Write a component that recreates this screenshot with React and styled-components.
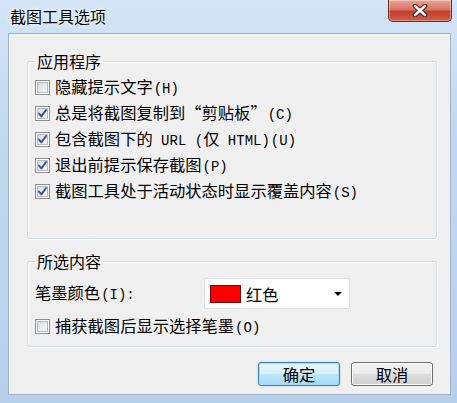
import React from "react";
import styled, { createGlobalStyle } from "styled-components";

const Global = createGlobalStyle`
  html, body { margin: 0; padding: 0; }
  body {
    width: 457px; height: 403px; overflow: hidden;
    font-family: "Noto Sans CJK SC", "Noto Sans", sans-serif;
    color: #000;
  }
`;

const Window = styled.div`
  width: 457px; height: 403px; box-sizing: border-box;
  padding: 0 6px 8px 8px;
  display: flex; flex-direction: column;
  background: linear-gradient(180deg, #d3e5f6 0%, #c1d8f0 35%, #b6d0ec 100%);
`;

const TitleBar = styled.div`
  height: 33px; flex: none;
  display: flex; align-items: flex-start; justify-content: space-between;
`;

const Title = styled.div`
  margin: 8px 0 0 2px;
  font-size: 16px; line-height: 16px;
  text-shadow: 0 0 6px rgba(255,255,255,0.9), 0 0 2px rgba(255,255,255,0.9);
`;

const CloseButton = styled.div`
  width: 64px; height: 22px; box-sizing: border-box; margin-right: -1px;
  border: 1px solid #6a2b22; border-top: none;
  border-radius: 0 0 5px 5px;
  background: linear-gradient(180deg, #eaa597 0%, #d87566 45%, #c43f2e 55%, #d25e49 100%);
  box-shadow: inset 0 0 0 1px rgba(255,255,255,0.35);
  display: flex; align-items: center; justify-content: center;
`;

const Client = styled.div`
  flex: 1; box-sizing: border-box;
  background: #f0f0f0;
  border: 1px solid #a2b5cc;
  display: flex; flex-direction: column;
`;

const Group = styled.fieldset`
  margin: ${p => p.$top}px 13px 0 18px;
  padding: ${p => p.$pt}px 7px ${p => p.$pb}px 7px;
  border: 1px solid #d3dce2;
  border-radius: 3px;
  box-shadow: inset 1px 1px 0 #fff, 1px 1px 0 #fff;
  min-width: 0;
`;

const Legend = styled.legend`
  padding: 0 2px; margin: 0;
  font-size: 16px; line-height: 16px;
`;

const CheckRow = styled.label`
  height: 26px; display: flex; align-items: center; gap: 5px;
  font-size: 16.3px; line-height: 16px; white-space: nowrap;
  margin-top: ${p => p.$mt || 0}px;
`;

const Box = styled.span`
  width: 15px; height: 15px; box-sizing: border-box; flex: none;
  border: 1px solid #8f8f8f;
  background: #fff;
  padding: 1px;
  display: flex;
`;

const BoxInner = styled.span`
  flex: 1; display: flex; align-items: center; justify-content: center;
  border: 1px solid #b7bcc3;
  background: linear-gradient(135deg, #d4d8dd 0%, #eceef0 60%, #f8f8f8 100%);
  position: relative;
`;

const CheckSvg = styled.svg`
  position: absolute; left: -2px; top: -2px;
`;

const Latin = styled.span`
  font-family: "Liberation Mono", "DejaVu Sans Mono", monospace;
  font-size: 14px;
`;

const Key = styled(Latin)`
  margin-left: 1px;
`;

const FieldRow = styled.div`
  height: 31px;
  display: grid; grid-template-columns: 169px 146px; align-items: center;
`;

const FieldLabel = styled.span`
  font-size: 16.3px; line-height: 16px; white-space: nowrap;
`;

const Select = styled.div`
  height: 31px; box-sizing: border-box;
  border: 1px solid #dde1e6; border-radius: 2px;
  background: #fff;
  display: flex; align-items: center;
  padding-left: 5px; padding-right: 7px;
  font-size: 16.3px; line-height: 16px;
`;

const Swatch = styled.span`
  width: 31px; height: 18px; box-sizing: border-box;
  background: ${p => p.$color};
  border: 1px solid #6e0d0d;
  margin-right: 5px;
`;

const Arrow = styled.span`
  margin-left: auto;
  width: 0; height: 0;
  border-left: 4px solid transparent;
  border-right: 4px solid transparent;
  border-top: 4px solid #000;
`;

const ButtonRow = styled.div`
  display: flex; justify-content: flex-end; gap: 11px;
  margin: 15px 17px 0 0;
`;

const Button = styled.button`
  width: 82px; height: 24px; box-sizing: border-box;
  font-family: inherit; font-size: 16.3px; line-height: 16px; padding: 0;
  color: #000;
  border-radius: 3px;
  border: 1px solid ${p => (p.$default ? "#3c7fb1" : "#707070")};
  background: ${p =>
    p.$default
      ? "linear-gradient(180deg, #eaf6fd 0%, #d9f0fc 50%, #bee6fd 51%, #a7d9f5 100%)"
      : "linear-gradient(180deg, #f2f2f2 0%, #ebebeb 50%, #dddddd 51%, #cfcfcf 100%)"};
  box-shadow: ${p =>
    p.$default
      ? "inset 0 0 0 1px #a9def7, 0 0 2px #8ccbee"
      : "inset 0 0 0 1px #fcfcfc"};
`;

function Checkbox({ checked, children, mt }) {
  return (
    <CheckRow $mt={mt}>
      <Box>
        <BoxInner>
          {checked && (
            <CheckSvg width="13" height="13" viewBox="0 0 13 13">
              <path d="M3 6.6 L5.4 9.4 L10 3" fill="none" stroke="#3a4e9c" strokeWidth="1.9" strokeLinecap="round" strokeLinejoin="round" />
            </CheckSvg>
          )}
        </BoxInner>
      </Box>
      <span>{children}</span>
    </CheckRow>
  );
}

export default function App() {
  return (
    <>
      <Global />
      <Window>
        <TitleBar>
          <Title>截图工具选项</Title>
          <CloseButton>
            <svg width="16" height="13" viewBox="0 0 16 13">
              <path d="M3 2 L13 11 M13 2 L3 11" stroke="#4a1a14" strokeWidth="4.6" strokeLinecap="round" />
              <path d="M3 2 L13 11 M13 2 L3 11" stroke="#fff" strokeWidth="2.6" strokeLinecap="round" />
            </svg>
          </CloseButton>
        </TitleBar>
        <Client>
          <Group $top={19} $pt={5} $pb={34}>
            <Legend>应用程序</Legend>
            <Checkbox>隐藏提示文字<Key>(H)</Key></Checkbox>
            <Checkbox checked>总是将截图复制到“剪贴板”<Key>(C)</Key></Checkbox>
            <Checkbox checked>包含截图下的<Latin> URL (</Latin>仅<Latin> HTML)</Latin><Key>(U)</Key></Checkbox>
            <Checkbox checked>退出前提示保存截图<Key>(P)</Key></Checkbox>
            <Checkbox checked>截图工具处于活动状态时显示覆盖内容<Key>(S)</Key></Checkbox>
          </Group>
          <Group $top={14} $pt={9} $pb={7}>
            <Legend>所选内容</Legend>
            <FieldRow>
              <FieldLabel>笔墨颜色<Key>(I)</Key><Latin>:</Latin></FieldLabel>
              <Select>
                <Swatch $color="#ff0000" />
                红色
                <Arrow />
              </Select>
            </FieldRow>
            <Checkbox mt={4}>捕获截图后显示选择笔墨<Key>(O)</Key></Checkbox>
          </Group>
          <ButtonRow>
            <Button $default>确定</Button>
            <Button>取消</Button>
          </ButtonRow>
        </Client>
      </Window>
    </>
  );
}
